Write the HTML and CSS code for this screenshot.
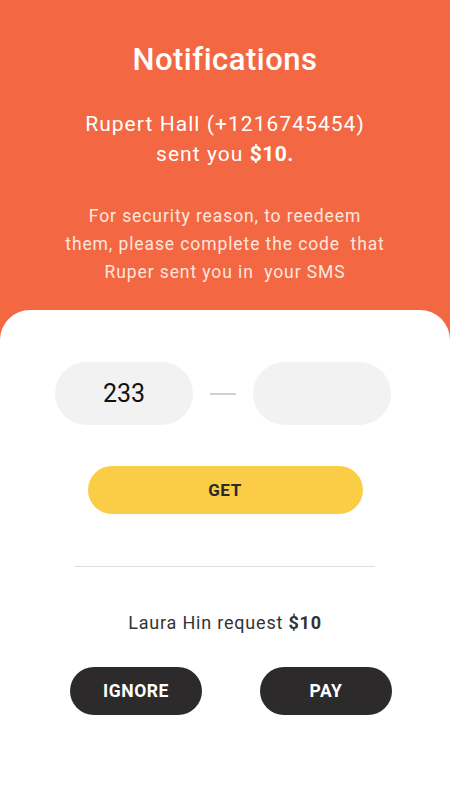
FILE: index.html
```html
<!DOCTYPE html>
<html>
<head>
<meta charset="utf-8">
<link rel="stylesheet" href="styles.css">
</head>
<body>
<div class="screen">
  <header class="hero">
    <h1 class="title">Notifications</h1>
    <p class="sent">Rupert Hall (+1216745454)<br>sent you <b>$10.</b></p>
    <p class="note">For security reason, to reedeem<br>them, please complete the code&nbsp; that<br>Ruper sent you in&nbsp; your SMS</p>
  </header>
  <main class="card">
    <div class="code-row">
      <div class="pill">233</div>
      <div class="dash"></div>
      <div class="pill"></div>
    </div>
    <button class="get">GET</button>
    <hr class="divider">
    <p class="request">Laura Hin request <b>$10</b></p>
    <div class="actions">
      <button class="dark">IGNORE</button>
      <button class="dark">PAY</button>
    </div>
  </main>
</div>
</body>
</html>
```
FILE: styles.css
```css
html, body {
  margin: 0;
  padding: 0;
  background: #ffffff;
}
body {
  font-family: "Roboto", "Liberation Sans", sans-serif;
}
.screen {
  width: 450px;
  height: 800px;
  display: flex;
  flex-direction: column;
  background: #ffffff;
}
.hero {
  background: #f36843;
  color: #ffffff;
  text-align: center;
  padding: 40px 0 54px;
}
.title {
  margin: 0;
  font-size: 31px;
  font-weight: 500;
  line-height: 40px;
  letter-spacing: 0.5px;
}
.sent {
  margin: 29px 0 0;
  font-size: 21px;
  line-height: 30px;
  font-weight: 400;
  letter-spacing: 1.05px;
}
.sent b { font-weight: 700; letter-spacing: 0.5px; }
.note {
  margin: 33px 0 0;
  font-size: 17.5px;
  line-height: 28px;
  font-weight: 400;
  letter-spacing: 0.9px;
  color: #fde6de;
}
.card {
  background: #ffffff;
  border-radius: 30px 30px 0 0;
  margin-top: -30px;
  flex: 1;
  display: flex;
  flex-direction: column;
  align-items: center;
  padding-top: 52px;
}
.code-row {
  display: flex;
  align-items: center;
  gap: 17px;
  margin-right: 4px;
}
.pill {
  width: 138px;
  height: 63px;
  border-radius: 32px;
  background: #f2f2f2;
  display: flex;
  align-items: center;
  justify-content: center;
  font-size: 25px;
  color: #111;
}
.dash {
  width: 26px;
  height: 2px;
  background: #cfcfcf;
}
.get {
  margin-top: 41px;
  width: 275px;
  height: 48px;
  border: none;
  border-radius: 24px;
  background: #fbcd47;
  color: #2a2a2a;
  font-family: inherit;
  font-weight: 700;
  font-size: 17px;
  letter-spacing: 0.6px;
}
.divider {
  margin: 52px 0 0;
  width: 300px;
  border: none;
  height: 1px;
  background: #dddddd;
}
.request {
  margin: 44px 0 0;
  font-size: 18px;
  line-height: 24px;
  font-weight: 400;
  letter-spacing: 0.8px;
  color: #333;
}
.request b { font-weight: 700; }
.actions {
  margin-top: 32px;
  margin-left: 12px;
  display: flex;
  gap: 58px;
}
.dark {
  width: 132px;
  height: 48px;
  border: none;
  border-radius: 24px;
  background: #2d2a2b;
  color: #ffffff;
  font-family: inherit;
  font-weight: 700;
  font-size: 17.5px;
  letter-spacing: 0.6px;
}
```
